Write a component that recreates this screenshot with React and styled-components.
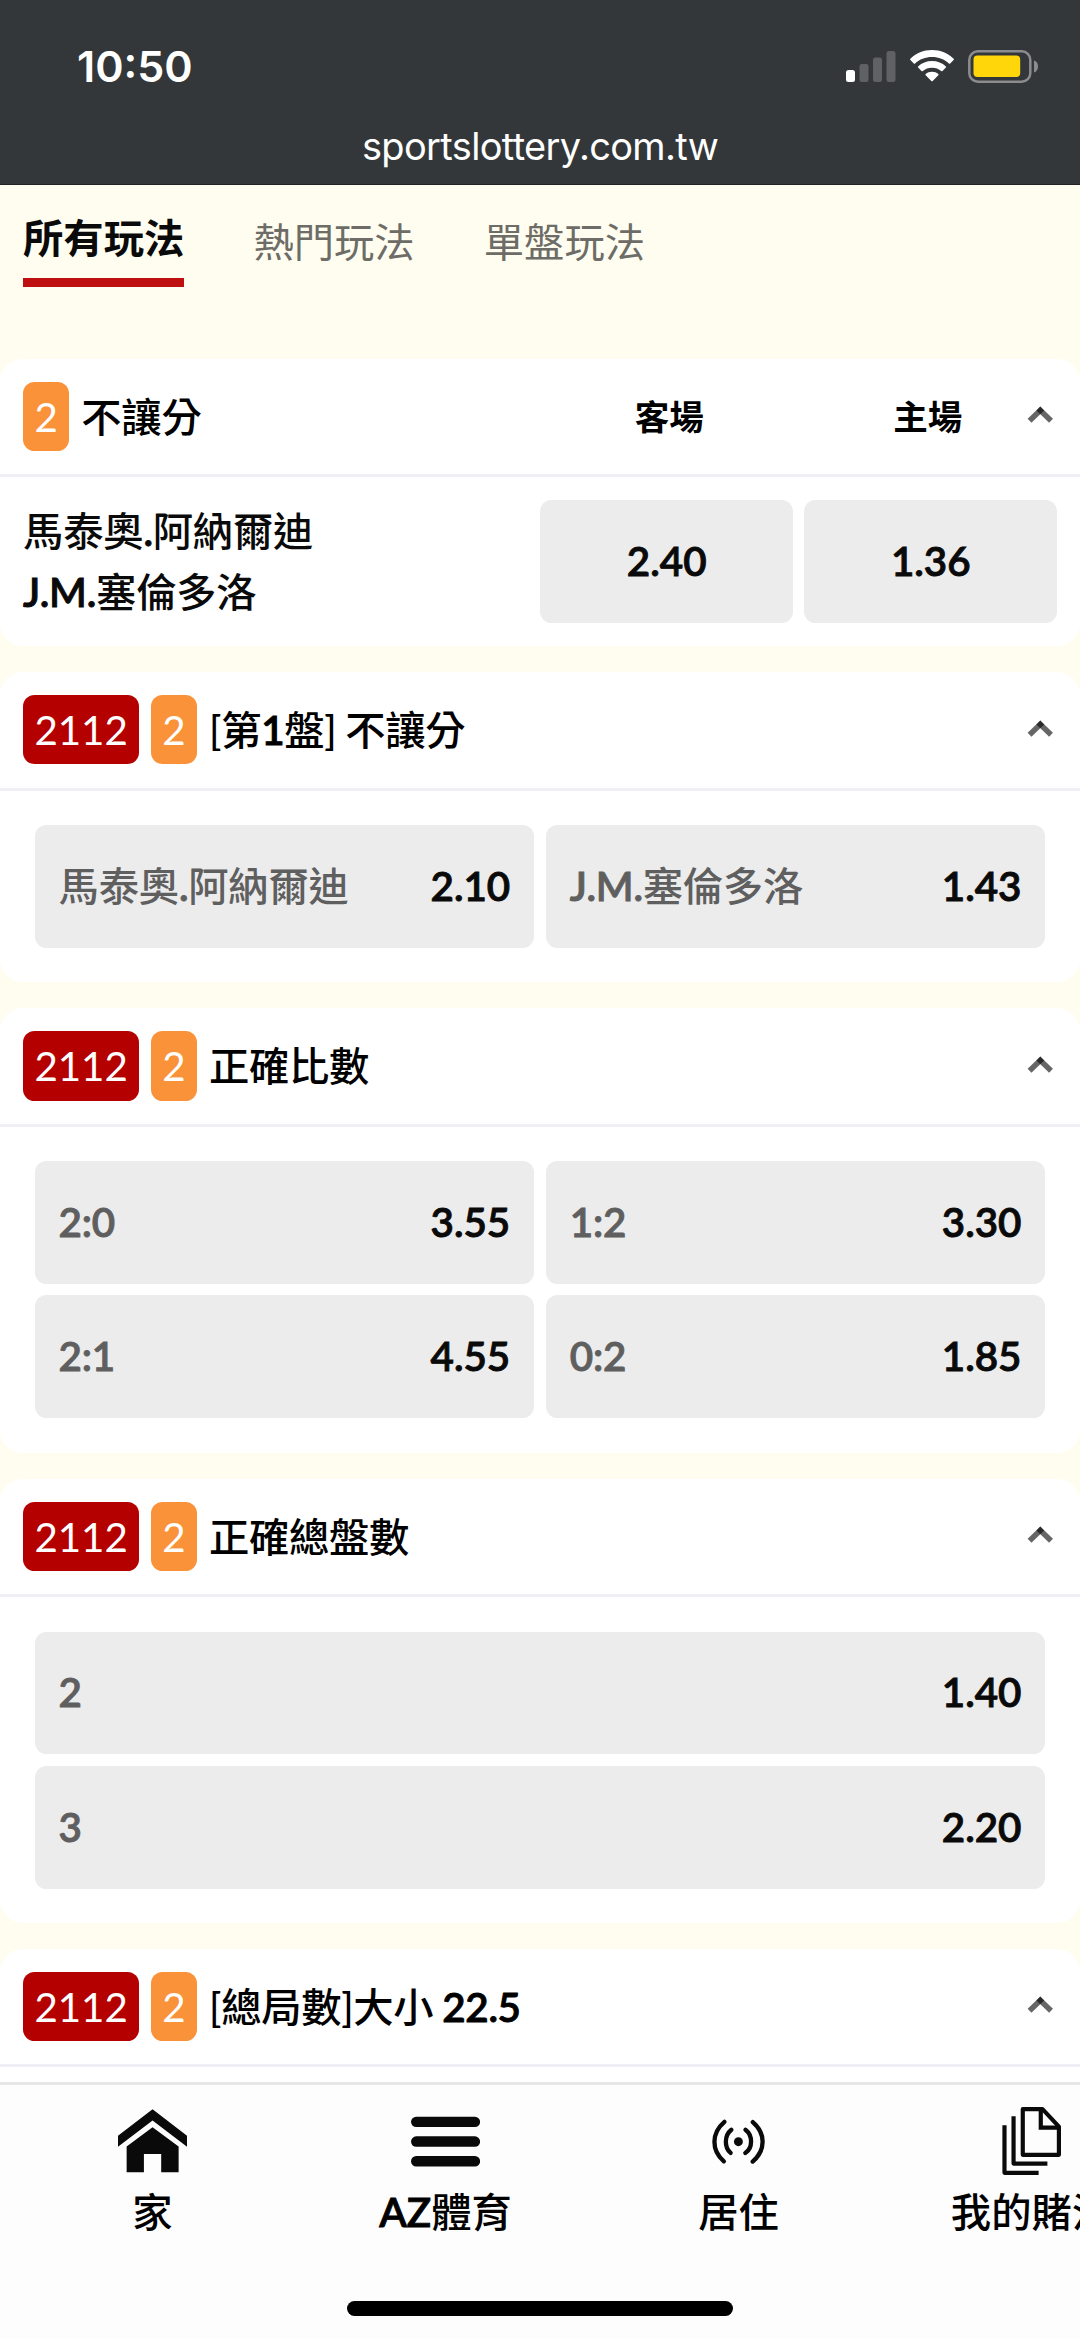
import styled, { createGlobalStyle, css } from "styled-components";

const GlobalStyle = createGlobalStyle`
  *, *::before, *::after {
    box-sizing: border-box;
  }

  :root {
    --color-cream: #fffdf0;
    --color-status: #343739;
    --color-red: #b50000;
    --color-underline: #be0f11;
    --color-orange: #f99239;
    --color-tile: #ececec;
    --color-gray: #5f5f5f;
    --color-tab: #6d6c66;
    --color-line: #f0eff5;
    --color-black: #0a0a0a;
    --font-ui: Inter, Roboto, sans-serif;
    --font-body: Lato, "Noto Sans CJK TC", sans-serif;
  }

  /* 1rem = 16 css pixels on a 375 wide phone */
  html {
    font-size: 46.08px;
  }

  body {
    margin: 0;
    background: #fff;
    color: #000;
    font-family: var(--font-body);
    font-size: ${14 / 16}rem;
  }
`;

/* latin letters and digits sit between Lato semibold and bold */
const latinText = css`
  font-weight: 600;
  -webkit-text-stroke: 0.9px currentColor;
`;

const Latin = styled.span`
  ${latinText}
`;

const Screen = styled.div`
  width: 1080px;
  height: 2339px;
  display: flex;
  flex-direction: column;
  overflow: hidden;
  background: var(--color-cream);
`;

const BrowserBar = styled.header`
  flex: none;
  height: 185px;
  display: flex;
  flex-direction: column;
  background: var(--color-status);
  border-bottom: 1px solid #202224;
  color: #fff;
  font-family: var(--font-ui);
`;

const StatusRow = styled.div`
  display: flex;
  justify-content: space-between;
  padding: 50px 41px 0 77px;
  height: 120px;
`;

const Clock = styled.span`
  font-size: 43px;
  line-height: 33px;
  font-weight: 600;
`;

const StatusIcons = styled.div`
  display: flex;
  gap: 14px;
  height: 33px;
`;

const Address = styled.div`
  text-align: center;
  font-size: 38px;
  line-height: 52px;
  letter-spacing: -0.65px;
`;

const Tabs = styled.nav`
  flex: none;
  height: 174px;
  display: flex;
  align-items: flex-start;
  gap: 1.5rem;
  padding: 24px 0.5rem 0;
`;

const Tab = styled.a`
  height: 78px;
  line-height: 66px;
  color: var(--color-tab);

  ${(p) =>
    p.$active &&
    css`
      line-height: 58px;
      color: var(--color-black);
      font-weight: 700;
      border-bottom: 9px solid var(--color-underline);
    `}
`;

const Markets = styled.main`
  flex: 1;
  min-height: 0;
  overflow: hidden;
  display: flex;
  flex-direction: column;
  gap: 26px;
`;

const Card = styled.section`
  flex: none;
  background: #fff;
  border-radius: 0.5rem;
`;

const CardHeader = styled.div`
  height: 118.4px;
  display: flex;
  align-items: center;
  gap: 0.25rem;
  padding: 0 0.5rem;
  border-bottom: 3px solid var(--color-line);
`;

const Badge = styled.span`
  height: 1.5rem;
  line-height: ${24.6 / 16}rem;
  padding: 0 0.25rem;
  border-radius: 0.25rem;
  color: #fff;
  letter-spacing: -0.1px;
  background: ${(p) => (p.$red ? "var(--color-red)" : "var(--color-orange)")};
`;

const Title = styled.h2`
  flex: 1;
  margin: 0;
  padding-left: 0.5px;
  font-size: inherit;
  font-weight: 500;
  line-height: 1.5rem;
  letter-spacing: -0.3px;
  word-spacing: -1px;
  white-space: nowrap;
`;

const ColumnHeads = styled.div`
  width: 517px;
  display: grid;
  grid-template-columns: 1fr 1fr;
  margin-right: 1px;
  padding-bottom: 4px;
  text-align: center;
  font-size: 0.75rem;
  font-weight: 600;
`;

const Chevron = styled.svg`
  width: 0.75rem;
  height: 0.75rem;
  margin: 0 -1px 0 -1rem;
  stroke: #000;
  stroke-opacity: 0.6;
  stroke-width: 5.5;
`;

const MatchRow = styled.div`
  display: flex;
  align-items: center;
  justify-content: space-between;
  padding: 0.5rem;
`;

const Players = styled.div`
  line-height: ${21 / 16}rem;
  color: var(--color-black);
  font-weight: 500;
  letter-spacing: -0.2px;
`;

const OddsPair = styled.div`
  width: 516.5px;
  display: grid;
  grid-template-columns: 1fr 1fr;
  gap: 0.25rem;
`;

const TileGrid = styled.div`
  display: grid;
  grid-template-columns: repeat(${(p) => p.$columns}, 1fr);
  gap: 0.25rem;
  padding: 0.75rem;
`;

const Tile = styled.button`
  height: 122.7px;
  display: flex;
  align-items: center;
  justify-content: ${(p) => (p.$centered ? "center" : "space-between")};
  padding: 0 24px;
  border: none;
  border-radius: 0.25rem;
  background: var(--color-tile);
  font: inherit;
`;

const TileLabel = styled.span`
  line-height: 48px;
  padding-bottom: 1px;
  color: var(--color-gray);
  font-weight: 500;
  letter-spacing: -0.2px;
`;

const TileOdds = styled.span`
  line-height: 48px;
  padding-bottom: 1px;
  color: var(--color-black);
  ${latinText}
`;

const BottomBar = styled.footer`
  flex: none;
  height: 257px;
  display: flex;
  flex-direction: column;
  align-items: center;
  background: #fdfdfd;
  border-top: 3px solid #e6e6e6;
`;

const NavItems = styled.div`
  width: 100%;
  height: 216px;
  display: flex;
  padding: 22px 0 0 6px;
`;

const NavItem = styled.a`
  flex: none;
  width: 293px;
  display: flex;
  flex-direction: column;
  align-items: center;
  font-weight: 500;
  white-space: nowrap;

  svg {
    width: 1.5rem;
    height: 1.5rem;
  }
`;

const NavLabel = styled.span`
  line-height: 72px;
`;

const HomeIndicator = styled.div`
  width: 386px;
  height: 15px;
  border-radius: 8px;
  background: #000;
`;

function SignalIcon() {
  return (
    <svg width="50" height="33" viewBox="0 0 50 33" fill="#606163">
      <rect x="0" y="20" width="9" height="12" rx="2.5" fill="#fff" />
      <rect x="13.5" y="14" width="9" height="18" rx="2.5" />
      <rect x="27" y="7.5" width="9" height="24.5" rx="2.5" />
      <rect x="40.5" y="1" width="9" height="31" rx="2.5" />
    </svg>
  );
}

function WifiIcon() {
  return (
    <svg width="44" height="33" viewBox="0 0 44 33" fill="#fff">
      <path d="M22 0C30.5 0 38 3.3 43.6 8.7Q44.2 9.4 43.6 10L40.2 13.4Q39.6 14 38.9 13.4C34.5 9.4 28.6 7 22 7S9.5 9.4 5.1 13.4Q4.4 14 3.8 13.4L.4 10Q-.2 9.4.4 8.7C6 3.3 13.5 0 22 0Z" />
      <path d="M22 11C27.4 11 32.2 13 35.9 16.4Q36.5 17 35.9 17.6L32.5 21Q31.9 21.6 31.2 21C28.8 18.9 25.6 17.7 22 17.7S15.2 18.9 12.8 21Q12.1 21.6 11.5 21L8.1 17.6Q7.5 17 8.1 16.4C11.8 13 16.6 11 22 11Z" />
      <path d="M22 21.8C24.5 21.8 26.6 22.6 28.3 24Q28.9 24.6 28.3 25.2L22.7 30.9Q22 31.6 21.3 30.9L15.7 25.2Q15.1 24.6 15.7 24C17.4 22.6 19.5 21.8 22 21.8Z" />
    </svg>
  );
}

function BatteryIcon() {
  return (
    <svg width="71" height="33" viewBox="0 0 71 33">
      <rect
        x="1.3"
        y="1.3"
        width="61"
        height="30.4"
        rx="8.5"
        fill="none"
        stroke="#8b8c8e"
        strokeWidth="2.5"
      />
      <rect x="5.5" y="5.5" width="46.7" height="21.5" rx="4" fill="#ffd60a" />
      <path d="M66 10.5C68.5 11 70 13.5 70 16.4S68.5 21.8 66 22.4Z" fill="#8b8c8e" />
    </svg>
  );
}

function HomeIcon() {
  return (
    <svg viewBox="0 0 24 24" fill="#0a0a0a">
      <path d="M12 .8L24 10V13.8L12 4.7L0 13.8V10Z" />
      <path d="M12 7L21.05 13.7V22.7H15V16.3H9V22.7H3V13.7Z" />
    </svg>
  );
}

function MenuIcon() {
  return (
    <svg viewBox="0 0 24 24" fill="#0a0a0a">
      <rect x="0" y="3.35" width="24" height="3.6" rx="1.8" />
      <rect x="0" y="10.2" width="24" height="3.6" rx="1.8" />
      <rect x="0" y="17.05" width="24" height="3.6" rx="1.8" />
    </svg>
  );
}

function LiveIcon() {
  return (
    <svg viewBox="0 0 24 24" fill="none" stroke="#0a0a0a" strokeWidth="1.5" strokeLinecap="round">
      <path d="M7.1 5.15C2.5 9.1 2.5 15 6.9 18.85" />
      <path d="M9.5 7.9C7 9.9 7 14.1 9.25 15.95" />
      <path d="M14.4 7.9C17 9.9 17 14.2 14.35 16" />
      <path d="M16.95 5.25C21.5 9.2 21.5 15 16.9 18.95" />
      <circle cx="11.95" cy="12.05" r="1.55" fill="#0a0a0a" stroke="none" />
    </svg>
  );
}

function BetsIcon() {
  return (
    <svg viewBox="0 0 24 24" fill="none" stroke="#0a0a0a" strokeWidth="1.45" strokeLinejoin="round">
      <path d="M8.95 .75H15.8L21.5 6.8V16.6H8.95Z" />
      <path d="M15.2 .75V7.15H21.5" strokeLinejoin="miter" />
      <path d="M5.75 3.2V19.65H17.5" />
      <path d="M2.6 6.35V22.85H14.45" />
    </svg>
  );
}

const MARKETS = [
  {
    title: "[第1盤] 不讓分",
    columns: 2,
    tiles: [
      ["馬泰奧.阿納爾迪", "2.10"],
      ["J.M.塞倫多洛", "1.43"],
    ],
  },
  {
    title: "正確比數",
    columns: 2,
    tiles: [
      ["2:0", "3.55"],
      ["1:2", "3.30"],
      ["2:1", "4.55"],
      ["0:2", "1.85"],
    ],
  },
  {
    title: "正確總盤數",
    columns: 1,
    tiles: [
      ["2", "1.40"],
      ["3", "2.20"],
    ],
  },
  { title: "[總局數]大小 22.5", columns: 2, tiles: [] },
];

const NAV = [
  { label: "家", icon: <HomeIcon /> },
  { label: "AZ體育", icon: <MenuIcon /> },
  { label: "居住", icon: <LiveIcon /> },
  { label: "我的賭注", icon: <BetsIcon /> },
];

function MixedText({ children }) {
  return children
    .split(/([A-Za-z0-9.:]+)/)
    .map((part, i) => (i % 2 ? <Latin key={i}>{part}</Latin> : part));
}

function CollapseIcon() {
  return (
    <Chevron viewBox="0 0 34.56 34.56">
      <path d="M6.55 21.85L19.25 9.55" />
      <path d="M28.05 21.85L15.35 9.55" />
    </Chevron>
  );
}

function Market({ title, columns, tiles }) {
  return (
    <Card>
      <CardHeader>
        <Badge $red>2112</Badge>
        <Badge>2</Badge>
        <Title>
          <MixedText>{title}</MixedText>
        </Title>
        <CollapseIcon />
      </CardHeader>
      <TileGrid $columns={columns}>
        {tiles.map(([label, odds]) => (
          <Tile key={label}>
            <TileLabel>
              <MixedText>{label}</MixedText>
            </TileLabel>
            <TileOdds>{odds}</TileOdds>
          </Tile>
        ))}
      </TileGrid>
    </Card>
  );
}

function App() {
  return (
    <>
      <GlobalStyle />
      <Screen>
        <BrowserBar>
          <StatusRow>
            <Clock>10:50</Clock>
            <StatusIcons>
              <SignalIcon />
              <WifiIcon />
              <BatteryIcon />
            </StatusIcons>
          </StatusRow>
          <Address>sportslottery.com.tw</Address>
        </BrowserBar>

        <Tabs>
          <Tab $active>所有玩法</Tab>
          <Tab>熱門玩法</Tab>
          <Tab>單盤玩法</Tab>
        </Tabs>

        <Markets>
          <Card>
            <CardHeader>
              <Badge>2</Badge>
              <Title>不讓分</Title>
              <ColumnHeads>
                <span>客場</span>
                <span>主場</span>
              </ColumnHeads>
              <CollapseIcon />
            </CardHeader>
            <MatchRow>
              <Players>
                <MixedText>馬泰奧.阿納爾迪</MixedText>
                <br />
                <MixedText>J.M.塞倫多洛</MixedText>
              </Players>
              <OddsPair>
                <Tile $centered>
                  <TileOdds>2.40</TileOdds>
                </Tile>
                <Tile $centered>
                  <TileOdds>1.36</TileOdds>
                </Tile>
              </OddsPair>
            </MatchRow>
          </Card>

          {MARKETS.map((market) => (
            <Market key={market.title} {...market} />
          ))}
        </Markets>

        <BottomBar>
          <NavItems>
            {NAV.map(({ label, icon }) => (
              <NavItem key={label}>
                {icon}
                <NavLabel>
                  <MixedText>{label}</MixedText>
                </NavLabel>
              </NavItem>
            ))}
          </NavItems>
          <HomeIndicator />
        </BottomBar>
      </Screen>
    </>
  );
}

export default App;
